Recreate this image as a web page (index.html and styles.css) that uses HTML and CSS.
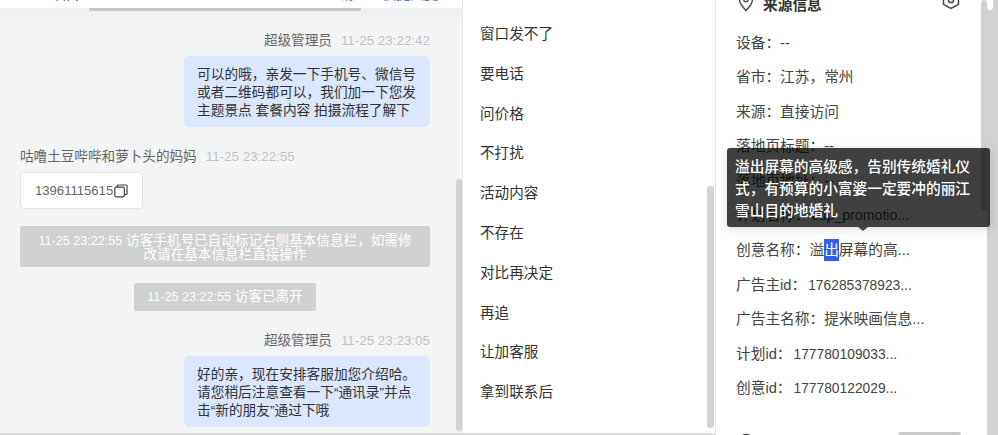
FILE: index.html
```html
<!DOCTYPE html>
<html lang="en">

<head>
    <meta charset="UTF-8">
    <title>会话详情</title>
    <link rel="stylesheet" href="styles.css">
</head>

<body>
    <div class="page">
        <div class="chat">
            <div class="tabs">
                <span class="tab-left">名片</span>
                <span class="tab-link">邀请</span>
                <span class="tab-link tab-last">快捷回复</span>
            </div>
            <div class="hbar-track"><div class="hbar"></div></div>
            <div class="chat-scroll">
                <div class="msgs">
                    <div class="msg-head right">超级管理员<span class="time">11-25 23:22:42</span></div>
                    <div class="bubble-row">
                        <div class="bubble">可以的哦，亲发一下手机号、微信号或者二维码都可以，我们加一下您发主题景点 套餐内容 拍摄流程了解下</div>
                    </div>

                    <div class="msg-head visitor">咕噜土豆哔哔和萝卜头的妈妈<span class="time">11-25 23:22:55</span></div>
                    <div class="phone">13961115615
                        <svg class="copy" width="14" height="14" viewBox="0 0 14 14" fill="none" stroke="#444" stroke-width="1.2">
                            <rect x="0.8" y="3.2" width="9.6" height="9.6" rx="1.5"></rect>
                            <path d="M3.4 3V1.9C3.4 1.3 3.8 1 4.3 1H12C12.6 1 13 1.4 13 2V9.7C13 10.2 12.6 10.6 12 10.6H10.6"></path>
                        </svg>
                    </div>

                    <div class="notice wide"><span class="stamp">11-25 23:22:55</span> 访客手机号已自动标记右侧基本信息栏，如需修改请在基本信息栏直接操作</div>
                    <div class="notice short"><span class="stamp">11-25 23:22:55</span> 访客已离开</div>

                    <div class="msg-head right second">超级管理员<span class="time">11-25 23:23:05</span></div>
                    <div class="bubble-row">
                        <div class="bubble">好的亲，现在安排客服加您介绍哈。请您稍后注意查看一下“通讯录”并点击“新的朋友”通过下哦</div>
                    </div>
                </div>
                <div class="vbar chat-bar"></div>
            </div>
        </div>

        <div class="replies">
            <ul class="reply-list">
                <li>窗口发不了</li>
                <li>要电话</li>
                <li>问价格</li>
                <li>不打扰</li>
                <li>活动内容</li>
                <li>不存在</li>
                <li>对比再决定</li>
                <li>再追</li>
                <li>让加客服</li>
                <li>拿到联系后</li>
            </ul>
            <div class="vbar reply-bar"></div>
        </div>

        <div class="info">
            <div class="info-head">
                <svg width="16" height="20" viewBox="0 0 16 20" fill="none" stroke="#444" stroke-width="1.4">
                    <path d="M8 18.5C4.5 14.8 1.5 11.5 1.5 7.8A6.5 6.5 0 0 1 14.5 7.8C14.5 11.5 11.5 14.8 8 18.5Z"></path>
                    <circle cx="8" cy="7.6" r="2.2"></circle>
                </svg>
                <span class="info-title">来源信息</span>
                <svg class="hex" width="18" height="20" viewBox="0 0 18 20" fill="none" stroke="#444" stroke-width="1.5">
                    <path d="M9 1.5L16.5 5.7V14.3L9 18.5L1.5 14.3V5.7Z"></path>
                    <circle cx="9" cy="10" r="2.6"></circle>
                </svg>
            </div>
            <ul class="info-list">
                <li>设备：--</li>
                <li>省市：江苏，常州</li>
                <li>来源：直接访问</li>
                <li>落地页标题：--</li>
                <li>落地页地址：--</li>
                <li>计划名称：<span class="num cdp">cdp_promotio...</span></li>
                <li>创意名称：溢<mark class="sel">出</mark>屏幕的高...</li>
                <li>广告主id：<span class="num">176285378923...</span></li>
                <li>广告主名称：提米映画信息...</li>
                <li>计划id：<span class="num">177780109033...</span></li>
                <li>创意id：<span class="num">177780122029...</span></li>
            </ul>
            <div class="info-foot">
                <svg class="foot-icon" width="16" height="16" viewBox="0 0 16 16" fill="none" stroke="#444" stroke-width="1.4">
                    <circle cx="8" cy="8" r="6.5"></circle>
                </svg>
                <span class="foot-btn"></span>
            </div>
            <div class="vbar info-bar"></div>
            <div class="tooltip">溢出屏幕的高级感，告别传统婚礼仪式，有预算的小富婆一定要冲的丽江雪山目的地婚礼</div>
        </div>

        <div class="side"><div class="side-notch"></div></div>
    </div>
</body>

</html>
```
FILE: styles.css
```css
* {
    box-sizing: border-box;
}

html,
body {
    margin: 0;
    height: 100%;
    overflow: hidden;
}

body {
    font-family: "Liberation Sans", "Noto Sans CJK SC", sans-serif;
    font-size: 14px;
    color: #333;
    background-color: #fff;
}

.page {
    display: flex;
    height: 435px;
    overflow: hidden;
}

/* left column */
.chat {
    width: 463px;
    height: 433px;
    background-color: #f3f4f6;
    border-right: 1px solid #e4e4e4;
    display: flex;
    flex-direction: column;
    overflow: hidden;
    box-shadow: 0 2px 0 #dcdcdc;
}

.tabs {
    height: 8px;
    background-color: #fff;
    display: flex;
    flex-shrink: 0;
    overflow: hidden;
    line-height: 0;
    font-size: 14px;
}

.tabs span {
    margin-top: -6px;
}

.tabs .tab-left {
    margin-left: 53px;
    color: #333;
}

.tabs .tab-link {
    margin-left: 245px;
    color: #3a7afe;
}

.tabs .tab-last {
    margin-left: 28px;
}

.hbar-track {
    height: 3px;
    flex-shrink: 0;
    padding-left: 89px;
    background-color: #eeeff0;
}

.hbar {
    width: 272px;
    height: 3px;
    background-color: #c6c6c6;
    border-radius: 0 0 2px 2px;
}

.chat-scroll {
    flex: 1;
    display: flex;
    min-height: 0;
    background: linear-gradient(#eeeff0, #f3f4f6 10px);
}

.msgs {
    width: 456px;
    padding: 19px 26px 0 20px;
}

.msg-head {
    height: 20px;
    line-height: 22px;
    font-size: 13.6px;
    color: #666;
}

.msg-head.right {
    text-align: right;
}

.msg-head.visitor {
    margin-top: 19px;
}

.msg-head.second {
    margin-top: 19px;
}

.time {
    margin-left: 9px;
    font-size: 13.4px;
    color: #c2c2c2;
}

.bubble-row {
    display: flex;
    justify-content: flex-end;
    margin-top: 6px;
}

.bubble {
    width: 246px;
    height: 71px;
    padding: 10px 13px;
    line-height: 18px;
    font-size: 13.7px;
    color: #333;
    background-color: #dbe7fe;
    border-radius: 5px;
}

.phone {
    display: flex;
    align-items: center;
    width: 123px;
    height: 37px;
    margin-top: 6px;
    padding-left: 14px;
    font-size: 13.1px;
    color: #666;
    background-color: #fff;
    border: 1px solid #e2e2e2;
    border-radius: 4px;
}

.copy {
    flex-shrink: 0;
    margin-left: 1px;
}

.notice {
    margin: 0 auto;
    font-size: 13.6px;
    color: #fff;
    text-align: center;
    background-color: #d0d1d1;
    border-radius: 2px;
}

.stamp {
    font-size: 12.6px;
}

.notice.wide {
    width: 410px;
    height: 41px;
    margin-top: 17px;
    padding: 8px 14px 0;
    line-height: 14px;
}

.notice.short {
    width: 182px;
    height: 28px;
    margin-top: 16px;
    line-height: 28px;
}

.vbar {
    width: 7px;
    background-color: #d2d2d2;
    border-radius: 3px;
}

.chat-bar {
    height: 252px;
    margin-top: 168px;
}

/* middle column */
.replies {
    width: 252px;
    height: 433px;
    display: flex;
    justify-content: space-between;
    box-shadow: 0 2px 0 #dcdcdc;
}

.reply-list {
    list-style: none;
    margin: 14px 0 0;
    padding: 0 0 0 17px;
    font-size: 14.6px;
    color: #333;
}

.reply-list li {
    height: 39.8px;
    line-height: 40px;
}

.reply-bar {
    height: 242px;
    margin: 186px 1px 0 0;
}

/* right column */
.info {
    width: 272px;
    border-left: 1px solid #e4e4e4;
    position: relative;
}

.info-head {
    display: flex;
    align-items: center;
    height: 20px;
    margin-top: -8px;
    padding: 0 27px 0 22px;
}

.info-title {
    flex: 1;
    margin-left: 9px;
    padding-top: 2px;
    font-size: 14.7px;
    font-weight: bold;
    color: #333;
}

.hex {
    margin-top: -5px;
}

.info-list {
    list-style: none;
    margin: 13.5px 0 0;
    padding: 0 0 0 20px;
    font-size: 14.7px;
    color: #444;
}

.info-list li {
    height: 34.6px;
    line-height: 35px;
    white-space: nowrap;
}

.num {
    margin-left: 2px;
    font-size: 13.8px;
}

.num.cdp {
    font-size: 14.2px;
}

.sel {
    display: inline-block;
    height: 22px;
    line-height: 22px;
    color: #fff;
    background-color: #2e5fe8;
}

.info-foot {
    display: flex;
    justify-content: space-between;
    margin-top: 25.5px;
    padding: 0 26px 0 22px;
}

.foot-icon {
    margin-top: 1px;
}

.foot-btn {
    width: 63px;
    height: 16px;
    background-color: #c9c9c9;
    border-radius: 3px 3px 0 0;
}

.info-bar {
    position: absolute;
    top: 0;
    right: 0;
    width: 6px;
    height: 211px;
}

.tooltip {
    position: absolute;
    top: 148px;
    left: 11px;
    width: 263px;
    height: 79px;
    padding: 8px 8px;
    font-size: 14.7px;
    font-weight: 500;
    line-height: 22px;
    color: #fff;
    background-color: rgba(0, 0, 0, 0.75);
    border-radius: 3px;
    box-shadow: 0 2px 8px rgba(0, 0, 0, 0.15);
}

.tooltip::after {
    content: "";
    position: absolute;
    left: 131px;
    bottom: -4px;
    border-left: 5px solid transparent;
    border-right: 5px solid transparent;
    border-top: 4px solid #444;
}

/* far right scrollbar */
.side {
    width: 11px;
    background-color: #d2d2d2;
}

.side-notch {
    width: 6px;
    height: 10px;
    background-color: #fff;
    border-radius: 0 0 3px 3px;
}
```
